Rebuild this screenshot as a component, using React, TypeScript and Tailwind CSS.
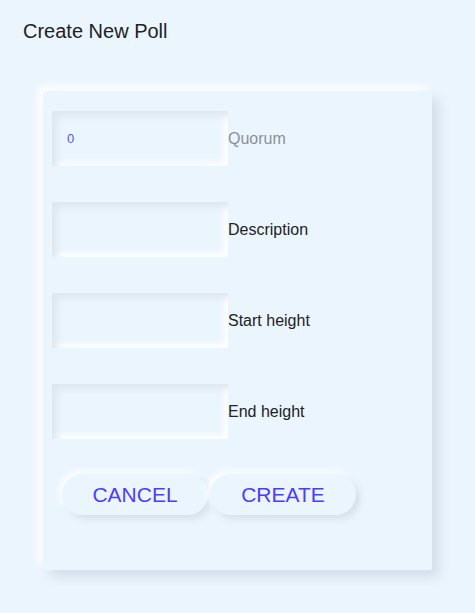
import React from "react";

const fields = [
  { label: "Quorum", value: "0", muted: true },
  { label: "Description", value: "", muted: false },
  { label: "Start height", value: "", muted: false },
  { label: "End height", value: "", muted: false },
];

const App: React.FC = () => {
  return (
    <div className="min-h-[613px] w-[475px] bg-[#ebf5fe] font-['Liberation_Sans',Arial,sans-serif] text-[#222]">
      <div className="px-[23px] pt-[18px] text-[20px] leading-[26px]">Create New Poll</div>
      <div className="ml-[43px] mt-[47px] h-[479px] w-[389px] rounded-[2px] bg-[#ebf5fe] pl-[9px] pt-[20px] shadow-[7px_7px_12px_#d3dee8,-5px_-5px_8px_#ffffff]">
        <div className="flex flex-col gap-[36px]">
          {fields.map((f) => (
            <div key={f.label} className="flex items-center">
              <input
                defaultValue={f.value}
                className="h-[55px] w-[176px] bg-[#ebf5fe] pl-[15px] text-[13px] text-[#5b4dff] outline-none shadow-[inset_5px_5px_7px_#dee7ef,inset_-4px_-4px_6px_#ffffff]"
              />
              <span
                className={
                  "text-[16px] " + (f.muted ? "text-[#8b9096]" : "text-[#222]")
                }
              >
                {f.label}
              </span>
            </div>
          ))}
        </div>
        <div className="ml-[10px] mt-[35px] flex gap-[2px]">
          <button className="h-[41px] w-[146px] rounded-full bg-[#ebf5fe] text-[21px] text-[#4b3dff] shadow-[4px_4px_7px_#d6e0ea,-3px_-3px_6px_#ffffff]">
            CANCEL
          </button>
          <button className="h-[41px] w-[146px] rounded-full bg-[#ebf5fe] text-[21px] text-[#4b3dff] shadow-[4px_4px_7px_#d6e0ea,-3px_-3px_6px_#ffffff]">
            CREATE
          </button>
        </div>
      </div>
    </div>
  );
};

export default App;
